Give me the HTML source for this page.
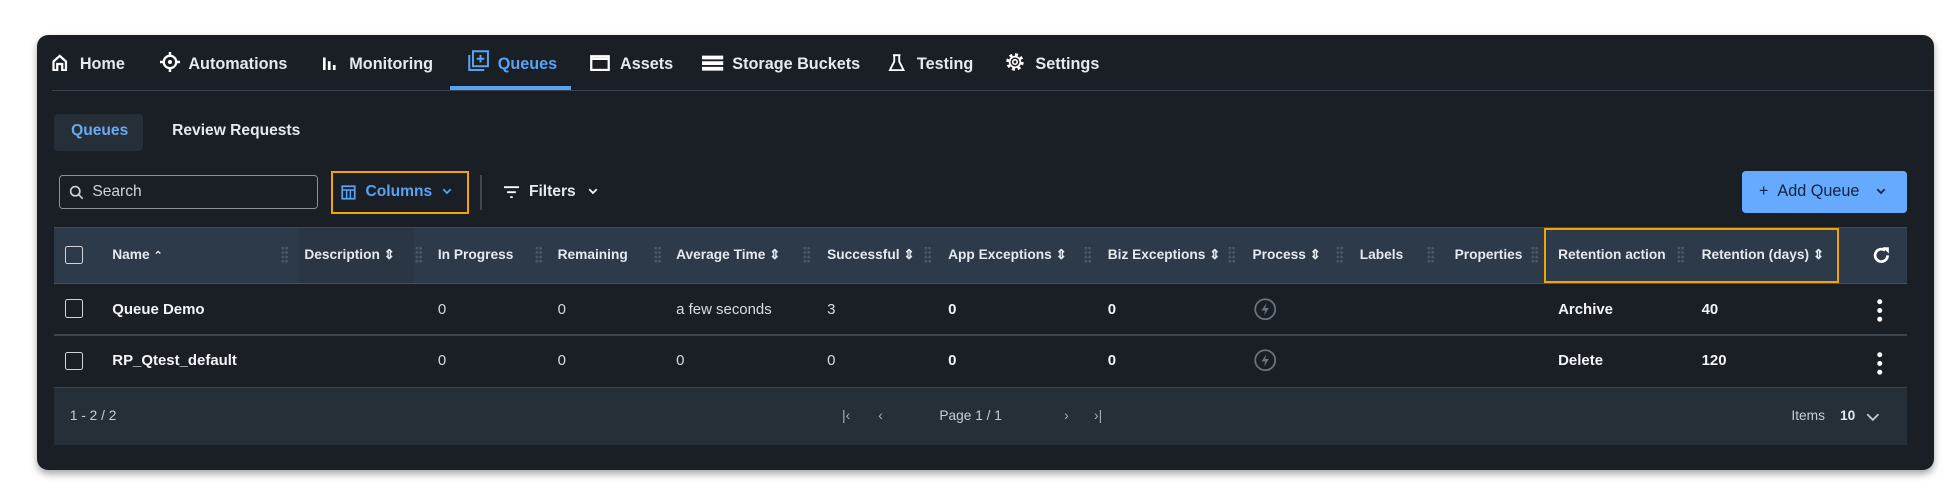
<!DOCTYPE html>
<html><head><meta charset="utf-8"><style>
html,body{margin:0;padding:0;background:#fff;width:1956px;height:498px;overflow:hidden}
#w{zoom:1.2475;position:relative;width:1568px;height:399px;font-family:"Liberation Sans",sans-serif;color:#e6e9ee}
.p{position:absolute;left:30px;top:28px;width:1520px;height:349px;background:#1a1f26;border-radius:9px;box-shadow:0 3px 6px rgba(0,0,0,.35)}
.a{position:absolute;white-space:nowrap}
.nav{font-size:13px;font-weight:bold;top:44px}
.h{font-size:11px;font-weight:bold;top:198px;color:#e6e9ee}
.c{font-size:12px;top:241px;color:#d8dce2}
.c2{font-size:12px;top:282px;color:#d8dce2}
.b{font-weight:bold;color:#f2f4f7}
.dh{position:absolute;top:197px;width:6px;height:14px;background-image:radial-gradient(circle,#4a5868 1px,transparent 1.3px);background-size:3px 3.5px}
.cb{position:absolute;left:52px;width:13px;height:13px;border:1.5px solid #d0d4da;border-radius:2px}
svg{position:absolute}
</style></head><body><div id="w">
<div class="p"></div>
<!-- nav -->
<div class="a" style="left:42px;top:72px;width:1508px;height:1px;background:#3a4450"></div>
<div class="a" style="left:361px;top:69px;width:97px;height:3px;background:#5aa2f2"></div>
<svg style="left:41px;top:43px" width="14" height="14" viewBox="0 0 14 14"><path d="M2 13V6L7 1.5 12 6v7H9V8H5v5z" fill="none" stroke="#fff" stroke-width="1.8"/></svg>
<div class="a nav" style="left:64px">Home</div>
<svg style="left:128px;top:42px" width="16" height="16" viewBox="0 0 16 16"><circle cx="8" cy="8" r="5" fill="none" stroke="#fff" stroke-width="1.8"/><circle cx="8" cy="8" r="1.6" fill="#fff"/><path d="M8 0v3M8 13v3M0 8h3M13 8h3" stroke="#fff" stroke-width="2"/></svg>
<div class="a nav" style="left:151px">Automations</div>
<svg style="left:259px;top:44px" width="12" height="12" viewBox="0 0 12 12"><path d="M1 2v10M5 5v7M9 8v4" stroke="#fff" stroke-width="2.2"/></svg>
<div class="a nav" style="left:280px">Monitoring</div>
<svg style="left:375px;top:40px" width="17" height="17" viewBox="0 0 17 17"><rect x="4" y="1" width="12" height="12" fill="none" stroke="#5aa2f2" stroke-width="1.6"/><path d="M1 4v12h12" fill="none" stroke="#5aa2f2" stroke-width="1.6"/><path d="M10 4v6M7 7h6" stroke="#5aa2f2" stroke-width="1.6"/></svg>
<div class="a nav" style="left:399px;color:#5aa2f2">Queues</div>
<svg style="left:473px;top:44px" width="16" height="13" viewBox="0 0 16 13"><rect x="1" y="1" width="14" height="11" fill="none" stroke="#fff" stroke-width="1.8"/><path d="M1 3h14" stroke="#fff" stroke-width="2"/></svg>
<div class="a nav" style="left:497px">Assets</div>
<svg style="left:563px;top:44px" width="17" height="13" viewBox="0 0 17 13"><path d="M0 2h17M0 6.5h17M0 11h17" stroke="#fff" stroke-width="3"/></svg>
<div class="a nav" style="left:587px">Storage Buckets</div>
<svg style="left:712px;top:43px" width="14" height="14" viewBox="0 0 14 14"><path d="M4 1h6M5 1v5L1.5 13h11L9 6V1" fill="none" stroke="#fff" stroke-width="1.5"/></svg>
<div class="a nav" style="left:735px">Testing</div>
<svg style="left:806px;top:42px" width="16" height="16" viewBox="0 0 16 16"><circle cx="8" cy="8" r="5.5" fill="none" stroke="#fff" stroke-width="3" stroke-dasharray="2.2 2.1"/><circle cx="8" cy="8" r="4.3" fill="none" stroke="#fff" stroke-width="1.4"/><circle cx="8" cy="8" r="1.8" fill="none" stroke="#fff" stroke-width="1.3"/></svg>
<div class="a nav" style="left:830px">Settings</div>
<!-- subtabs -->
<div class="a" style="left:43px;top:91px;width:72px;height:30px;background:#262e38;border-radius:3px"></div>
<div class="a" style="left:57px;top:98px;font-size:12.5px;font-weight:bold;color:#6aa8f0">Queues</div>
<div class="a" style="left:138px;top:98px;font-size:12.5px;font-weight:bold;color:#e6e9ee">Review Requests</div>
<!-- toolbar -->
<div class="a" style="left:47px;top:140px;width:206px;height:26px;border:1px solid #8a929c;border-radius:3px"></div>
<svg style="left:55px;top:148px" width="12" height="12" viewBox="0 0 12 12"><circle cx="5" cy="5" r="3.7" fill="none" stroke="#cfd3d8" stroke-width="1.3"/><path d="M7.7 7.7 11 11" stroke="#cfd3d8" stroke-width="1.3"/></svg>
<div class="a" style="left:74px;top:147px;font-size:12.5px;color:#d0d4d9">Search</div>
<div class="a" style="left:265px;top:137px;width:108px;height:31px;border:2px solid #f0a500"></div>
<svg style="left:273px;top:148px" width="12" height="12" viewBox="0 0 12 12"><rect x="1" y="1" width="10" height="10" fill="none" stroke="#5aa2f2" stroke-width="1.4"/><path d="M1 4h10M4.5 4v7M7.5 4v7" stroke="#5aa2f2" stroke-width="1.2"/></svg>
<div class="a" style="left:293px;top:147px;font-size:12.5px;font-weight:bold;color:#5aa2f2">Columns</div>
<svg style="left:354px;top:151px" width="8" height="6" viewBox="0 0 8 6"><path d="M1 1l3 3 3-3" fill="none" stroke="#5aa2f2" stroke-width="1.4"/></svg>
<div class="a" style="left:385px;top:140px;width:1px;height:28px;background:#3f4852"></div>
<svg style="left:404px;top:149px" width="12" height="10" viewBox="0 0 12 10"><path d="M0 1h12M2.5 5h7M5 9h2" stroke="#fff" stroke-width="1.5"/></svg>
<div class="a" style="left:424px;top:147px;font-size:12.5px;font-weight:bold">Filters</div>
<svg style="left:471px;top:151px" width="8" height="6" viewBox="0 0 8 6"><path d="M1 1l3 3 3-3" fill="none" stroke="#fff" stroke-width="1.4"/></svg>
<div class="a" style="left:1396px;top:137px;width:133px;height:34px;background:#66aaff;border-radius:3px"></div>
<div class="a" style="left:1410px;top:146px;font-size:13px;color:#13243a">+ &nbsp;Add Queue</div>
<svg style="left:1504px;top:151px" width="8" height="6" viewBox="0 0 8 6"><path d="M1 1l3 3 3-3" fill="none" stroke="#13243a" stroke-width="1.4"/></svg>
<!-- table header -->
<div class="a" style="left:43px;top:182px;width:1486px;height:45px;background:#2c3a4a;border-top:1px solid #3d4a58;box-sizing:border-box"></div>
<div class="a" style="left:240px;top:183px;width:92px;height:44px;background:#2a3644"></div>
<div class="a" style="left:43px;top:227px;width:1486px;height:1px;background:#46525e"></div>
<div class="a" style="left:43px;top:268px;width:1486px;height:1px;background:#3a4550"></div>
<div class="a" style="left:43px;top:310px;width:1486px;height:1px;background:#3a4550"></div>
<div class="a" style="left:43px;top:311px;width:1486px;height:46px;background:#262e38"></div>
<div class="cb" style="top:197px"></div><div class="cb" style="top:240px"></div><div class="cb" style="top:282px"></div>
<div class="a h" style="left:90px">Name <span style="font-size:9px">&#8963;</span></div>
<div class="a h" style="left:244px">Description &#8661;</div>
<div class="a h" style="left:351px">In Progress</div>
<div class="a h" style="left:447px">Remaining</div>
<div class="a h" style="left:542px">Average Time &#8661;</div>
<div class="a h" style="left:663px">Successful &#8661;</div>
<div class="a h" style="left:760px">App Exceptions &#8661;</div>
<div class="a h" style="left:888px">Biz Exceptions &#8661;</div>
<div class="a h" style="left:1004px">Process &#8661;</div>
<div class="a h" style="left:1090px">Labels</div>
<div class="a h" style="left:1166px">Properties</div>
<div class="a h" style="left:1249px">Retention action</div>
<div class="a h" style="left:1364px">Retention (days) &#8661;</div>
<div class="dh" style="left:225px"></div><div class="dh" style="left:333px"></div><div class="dh" style="left:429px"></div><div class="dh" style="left:524px"></div><div class="dh" style="left:644px"></div><div class="dh" style="left:741px"></div><div class="dh" style="left:869px"></div><div class="dh" style="left:984px"></div><div class="dh" style="left:1071px"></div><div class="dh" style="left:1144px"></div><div class="dh" style="left:1227px"></div><div class="dh" style="left:1344px"></div>
<div class="a" style="left:1238px;top:183px;width:233px;height:41px;border:2px solid #f0a500"></div>
<svg style="left:1501px;top:197px" width="15" height="15" viewBox="0 0 15 15"><path d="M12.5 7.5A5 5 0 1 1 10.5 3.5" fill="none" stroke="#fff" stroke-width="2.2"/><path d="M8.5 1h5v5z" fill="#fff"/></svg>
<!-- rows -->
<div class="a c b" style="left:90px">Queue Demo</div>
<div class="a c" style="left:351px">0</div><div class="a c" style="left:447px">0</div>
<div class="a c" style="left:542px">a few seconds</div><div class="a c" style="left:663px">3</div>
<div class="a c b" style="left:760px">0</div><div class="a c b" style="left:888px">0</div>
<div class="a c b" style="left:1249px">Archive</div><div class="a c b" style="left:1364px">40</div>
<div class="a c2 b" style="left:90px">RP_Qtest_default</div>
<div class="a c2" style="left:351px">0</div><div class="a c2" style="left:447px">0</div>
<div class="a c2" style="left:542px">0</div><div class="a c2" style="left:663px">0</div>
<div class="a c2 b" style="left:760px">0</div><div class="a c2 b" style="left:888px">0</div>
<div class="a c2 b" style="left:1249px">Delete</div><div class="a c2 b" style="left:1364px">120</div>
<svg style="left:1005px;top:239px" width="18" height="18" viewBox="0 0 18 18"><circle cx="9" cy="9" r="8" fill="none" stroke="#6b737c" stroke-width="1.4"/><path d="M10 4 6 10h3l-1 4 4-6H9z" fill="#6b737c"/></svg>
<svg style="left:1005px;top:280px" width="18" height="18" viewBox="0 0 18 18"><circle cx="9" cy="9" r="8" fill="none" stroke="#6b737c" stroke-width="1.4"/><path d="M10 4 6 10h3l-1 4 4-6H9z" fill="#6b737c"/></svg>
<svg style="left:1504px;top:239px" width="6" height="20" viewBox="0 0 6 20"><circle cx="3" cy="3" r="2" fill="#fff"/><circle cx="3" cy="10" r="2" fill="#fff"/><circle cx="3" cy="17" r="2" fill="#fff"/></svg>
<svg style="left:1504px;top:281px" width="6" height="20" viewBox="0 0 6 20"><circle cx="3" cy="3" r="2" fill="#fff"/><circle cx="3" cy="10" r="2" fill="#fff"/><circle cx="3" cy="17" r="2" fill="#fff"/></svg>
<!-- footer -->
<div class="a" style="left:56px;top:327px;font-size:11px;color:#c8cdd3">1 - 2 / 2</div>
<div class="a" style="left:675px;top:327px;font-size:11px;color:#aab0b8">|&lsaquo;</div>
<div class="a" style="left:704px;top:327px;font-size:11px;color:#aab0b8">&lsaquo;</div>
<div class="a" style="left:753px;top:327px;font-size:11px;color:#c8cdd3">Page 1 / 1</div>
<div class="a" style="left:853px;top:327px;font-size:11px;color:#aab0b8">&rsaquo;</div>
<div class="a" style="left:877px;top:327px;font-size:11px;color:#aab0b8">&rsaquo;|</div>
<div class="a" style="left:1436px;top:327px;font-size:11px;color:#c8cdd3">Items</div>
<div class="a" style="left:1475px;top:327px;font-size:11px;font-weight:bold;color:#e6e9ee">10</div>
<svg style="left:1496px;top:331px" width="11" height="7" viewBox="0 0 11 7"><path d="M1 1l4.5 4.5L10 1" fill="none" stroke="#c8cdd3" stroke-width="1.4"/></svg>
</div></body></html>
